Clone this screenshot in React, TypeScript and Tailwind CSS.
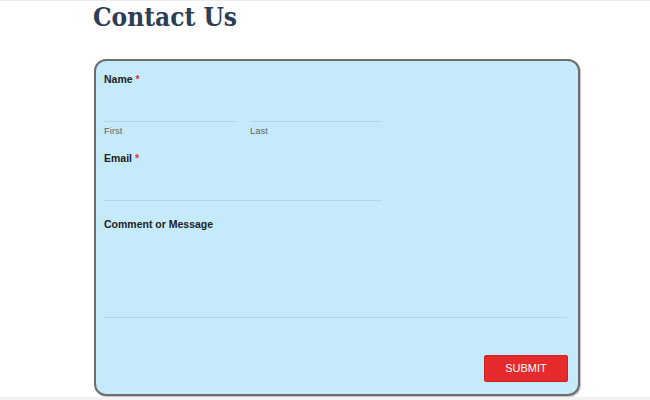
import React from "react";

export default function App() {
  return (
    <div className="w-[650px] h-[400px] bg-white overflow-hidden relative" style={{ fontFamily: "'Liberation Sans', Arial, sans-serif" }}>
      <div className="h-[1px] bg-[#eeeeee]" />
      <div className="ml-[93px] w-[487px]">
        <h1 className="text-[26px] leading-[32px] font-bold text-[#2c3e55] h-[58px]" style={{ fontFamily: "'DejaVu Serif Condensed', 'DejaVu Serif', serif", fontStretch: "condensed" }}>
          Contact Us
        </h1>
        <div className="ml-[1px] h-[337px] rounded-[12px] border-2 border-[#6e6e6e] bg-[#c5eaf9] shadow-[1px_1px_1px_rgba(0,0,0,0.25)] px-[8px] pt-[11px]">
          <div className="text-[10.5px] leading-[14px] font-bold text-[#222]">
            Name <span className="text-[#e53030]">*</span>
          </div>
          <div className="flex gap-[14px] w-[278px]">
            <div className="flex-1">
              <div className="h-[36px] border-b border-[#b2d8e6]" />
              <div className="text-[9.5px] leading-[14px] text-[#666] pt-[2px]">First</div>
            </div>
            <div className="flex-1">
              <div className="h-[36px] border-b border-[#b2d8e6]" />
              <div className="text-[9.5px] leading-[14px] text-[#666] pt-[2px]">Last</div>
            </div>
          </div>
          <div className="text-[10.5px] leading-[14px] font-bold text-[#222] mt-[13px]">
            Email <span className="text-[#e53030]">*</span>
          </div>
          <div className="h-[36px] w-[278px] border-b border-[#b2d8e6]" />
          <div className="text-[10.5px] leading-[14px] font-bold text-[#222] mt-[16px]">Comment or Message</div>
          <div className="h-[87px] w-[463px] border-b border-[#b2d8e6]" />
          <div className="flex justify-end w-[464px] mt-[37px]">
            <button className="w-[84px] h-[27px] bg-[#e52b2b] rounded-[2px] text-white text-[11px] leading-[25px] border border-[#d32020]">
              SUBMIT
            </button>
          </div>
        </div>
      </div>
      <div className="absolute left-0 right-0 bottom-0 h-[3px] bg-[#f2f2f2]" />
    </div>
  );
}
